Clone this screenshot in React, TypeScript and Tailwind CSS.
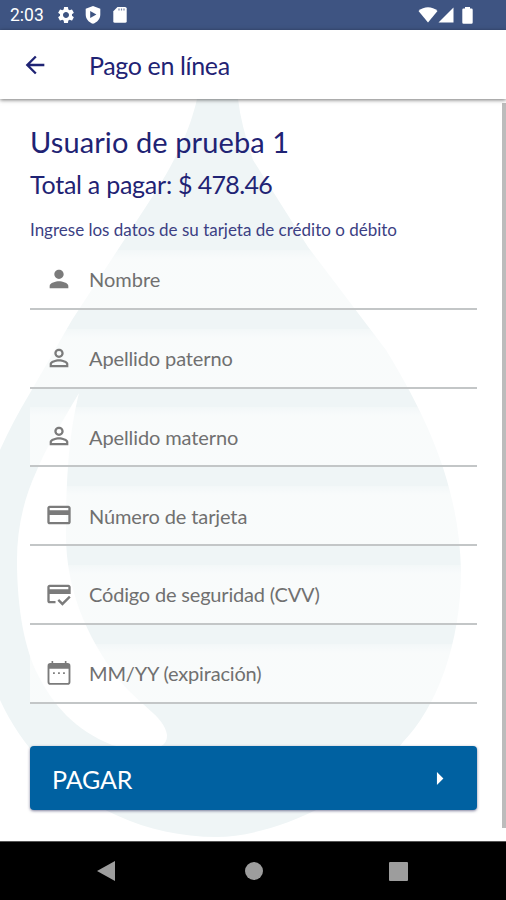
import React from 'react'
import {
    MdArrowBack,
    MdArrowRight,
    MdCreditCard,
    MdCreditScore,
    MdPerson,
    MdPersonOutline,
    MdSettings,
} from 'react-icons/md'

function CalendarIcon({ className }: { className?: string }) {
    return (
        <svg viewBox="0 0 24 24" className={className}>
            <rect x="3" y="4.3" width="18" height="17" rx="1.6" fill="none" stroke="currentColor" strokeWidth="1.6" />
            <path fill="currentColor" d="M3 4.3 H21 V8.3 H3 Z M5.6 1.8 H7 V5 H5.6 Z M17 1.8 H18.4 V5 H17 Z" />
            <path fill="currentColor" d="M6.9 11.4 H8.4 V12.9 H6.9 Z M11.2 11.4 H12.7 V12.9 H11.2 Z M15.5 11.4 H17 V12.9 H15.5 Z" />
        </svg>
    )
}

const fields = [
    { label: 'Nombre', icon: MdPerson, tracking: 'tracking-[0px]' },
    { label: 'Apellido paterno', icon: MdPersonOutline, tracking: 'tracking-[-0.12px]' },
    { label: 'Apellido materno', icon: MdPersonOutline, tracking: 'tracking-[-0.1px]' },
    { label: 'Número de tarjeta', icon: MdCreditCard, tracking: 'tracking-[-0.12px]' },
    { label: 'Código de seguridad (CVV)', icon: MdCreditScore, tracking: 'tracking-[-0.18px]' },
    { label: 'MM/YY (expiración)', icon: CalendarIcon, tracking: 'tracking-[-0.18px]' },
]

function StatusBar() {
    return (
        <div className="flex h-[30px] shrink-0 items-center bg-[#3e5482] pl-[10px] text-white">
            <span className="w-[46px] pt-px font-['Roboto'] text-[17.5px] leading-none">2:03</span>
            <MdSettings className="mr-[9px] h-[20px] w-[20px]" />
            {/* Play Protect */}
            <svg viewBox="0 0 16 18" className="mr-[12px] h-[18px] w-[16px]">
                <path
                    fillRule="evenodd"
                    fill="currentColor"
                    d="M8 0 L15.3 2.8 V8.5 C15.3 13 12.2 16.3 8 17.8 C3.8 16.3 .7 13 .7 8.5 V2.8 Z M5.2 5 V12 L11.4 8.5 Z"
                />
            </svg>
            {/* SD card */}
            <svg viewBox="0 0 14 16" className="h-[16px] w-[14px]">
                <path fill="currentColor" d="M4.5 0 H12 Q13.7 0 13.7 1.6 V14.2 Q13.7 15.7 12 15.7 H1.8 Q.3 15.7 .3 14.2 V4.3 Z" />
                <path stroke="#3e5482" strokeWidth="1.2" strokeOpacity=".7" d="M6 1.5 V3.5 M8.5 1.5 V3.5 M11 1.5 V3.5" />
            </svg>
            {/* Wifi, signal, battery */}
            <svg viewBox="0 0 20 16" className="ml-auto h-[16px] w-[20px]">
                <path fill="currentColor" d="M.5 4 C6 -1 14 -1 19.5 4 L10 15.5 Z" />
            </svg>
            <svg viewBox="0 0 16 16" className="h-[16px] w-[16px]">
                <path fill="currentColor" d="M15.5 .5 V15.5 H.5 Z" />
            </svg>
            <svg viewBox="0 0 11 17" className="mr-[33px] ml-[8px] h-[17px] w-[11px]">
                <path fill="currentColor" d="M3 0 H8 V1.5 H9.5 Q10.7 1.5 10.7 2.8 V15.5 Q10.7 16.7 9.5 16.7 H1.5 Q.3 16.7 .3 15.5 V2.8 Q.3 1.5 1.5 1.5 H3 Z" />
            </svg>
        </div>
    )
}

function DropBackground() {
    return (
        <svg viewBox="0 99 506 742" className="absolute inset-0 h-full w-full">
            <path
                fill="#eff5f6"
                d="M197 99 C190 129 177 160 147 205 L72 320 L30 393 Q12 423 0 450 V700 C34 775 115 837 217 837 C270 837 360 800 403 742 C436 708 461 645 461 570 C459 495 435 430 386 350 L308 247 L253 160 Q241 125 238 99 Z"
            />
            <path
                fill="#ffffff"
                d="M79 393 C62 422 45 450 37 470 C23 500 17 530 17 560 C17 610 25 650 38 675 C53 705 75 730 112 745 C145 753 168 751 167 735 C165 716 137 704 116 676 C87 636 66 590 66 535 C66 470 70 430 79 393 Z"
            />
        </svg>
    )
}

function Field({ label, icon: Icon, tracking }: (typeof fields)[number]) {
    return (
        <div className="mt-[18.8px] flex h-[60px] items-center border-b-2 border-[#c3c6c7] bg-gradient-to-b from-white/25 to-white/60 to-15% pl-[15px] text-[#7b7b7b]">
            <Icon className="mr-[16px] h-[28px] w-[28px] shrink-0" />
            <span className={`${tracking} pt-px text-[20px] leading-none whitespace-nowrap text-[#707070]`}>{label}</span>
        </div>
    )
}

export default function App() {
    return (
        <div className="flex h-[900px] w-[506px] flex-col overflow-hidden bg-white font-['Lato',sans-serif]">
            <StatusBar />

            <header className="z-10 flex h-[69px] shrink-0 items-center bg-white pl-[21px] text-[#1f2374] shadow-[0_1px_4px_rgba(0,0,0,0.55)]">
                <MdArrowBack className="mr-[40px] h-[28px] w-[28px]" />
                <h1 className="pt-[2px] text-[25px] leading-none tracking-[-0.36px]">Pago en línea</h1>
            </header>

            <main className="relative h-[742px] shrink-0">
                <DropBackground />
                <div className="relative flex h-full">
                    <div className="ml-[30px] w-[447px] text-[#1f2374]">
                        <h2 className="mt-[27px] text-[29px] leading-[32px] tracking-[0.1px] whitespace-nowrap">Usuario de prueba 1</h2>
                        <p className="mt-[12px] text-[25px] leading-[28px] tracking-[-0.25px] whitespace-nowrap">
                            Total a pagar: <span className="tracking-[-0.65px]">$ 478.46</span>
                        </p>
                        <p className="mt-[21px] h-[12px] text-[17px] leading-[22px] whitespace-nowrap text-[#3c3f83]">
                            Ingrese los datos de su tarjeta de crédito o débito
                        </p>
                        <form className="flex flex-col">
                            {fields.map((field) => (
                                <Field key={field.label} {...field} />
                            ))}
                            <button
                                type="button"
                                className="mt-[42.6px] flex h-[64px] items-center justify-between rounded-[4px] bg-[#0061a1] pr-[22px] pl-[22px] text-[25px] text-white shadow-[0_1px_3px_rgba(0,0,60,0.5)]"
                            >
                                <span className="pt-[2px] leading-none tracking-[-0.1px]">PAGAR</span>
                                <MdArrowRight className="h-[31px] w-[31px]" />
                            </button>
                        </form>
                    </div>
                    {/* Scrollbar */}
                    <div className="mt-[4px] ml-auto h-[725px] w-[4px] bg-[#bcbcbc]" />
                </div>
            </main>

            <nav className="flex h-[59px] shrink-0 items-center border-t border-[#555] bg-black text-[#9d9d9d]">
                <svg viewBox="0 0 18 20" className="ml-[97px] h-[20px] w-[18px]">
                    <path fill="currentColor" d="M18 0 V20 L0 10 Z" />
                </svg>
                <div className="ml-[130px] h-[18px] w-[18px] rounded-full bg-[#9d9d9d]" />
                <div className="ml-[126px] h-[19px] w-[19px] rounded-[1px] bg-[#9d9d9d]" />
            </nav>
        </div>
    )
}
